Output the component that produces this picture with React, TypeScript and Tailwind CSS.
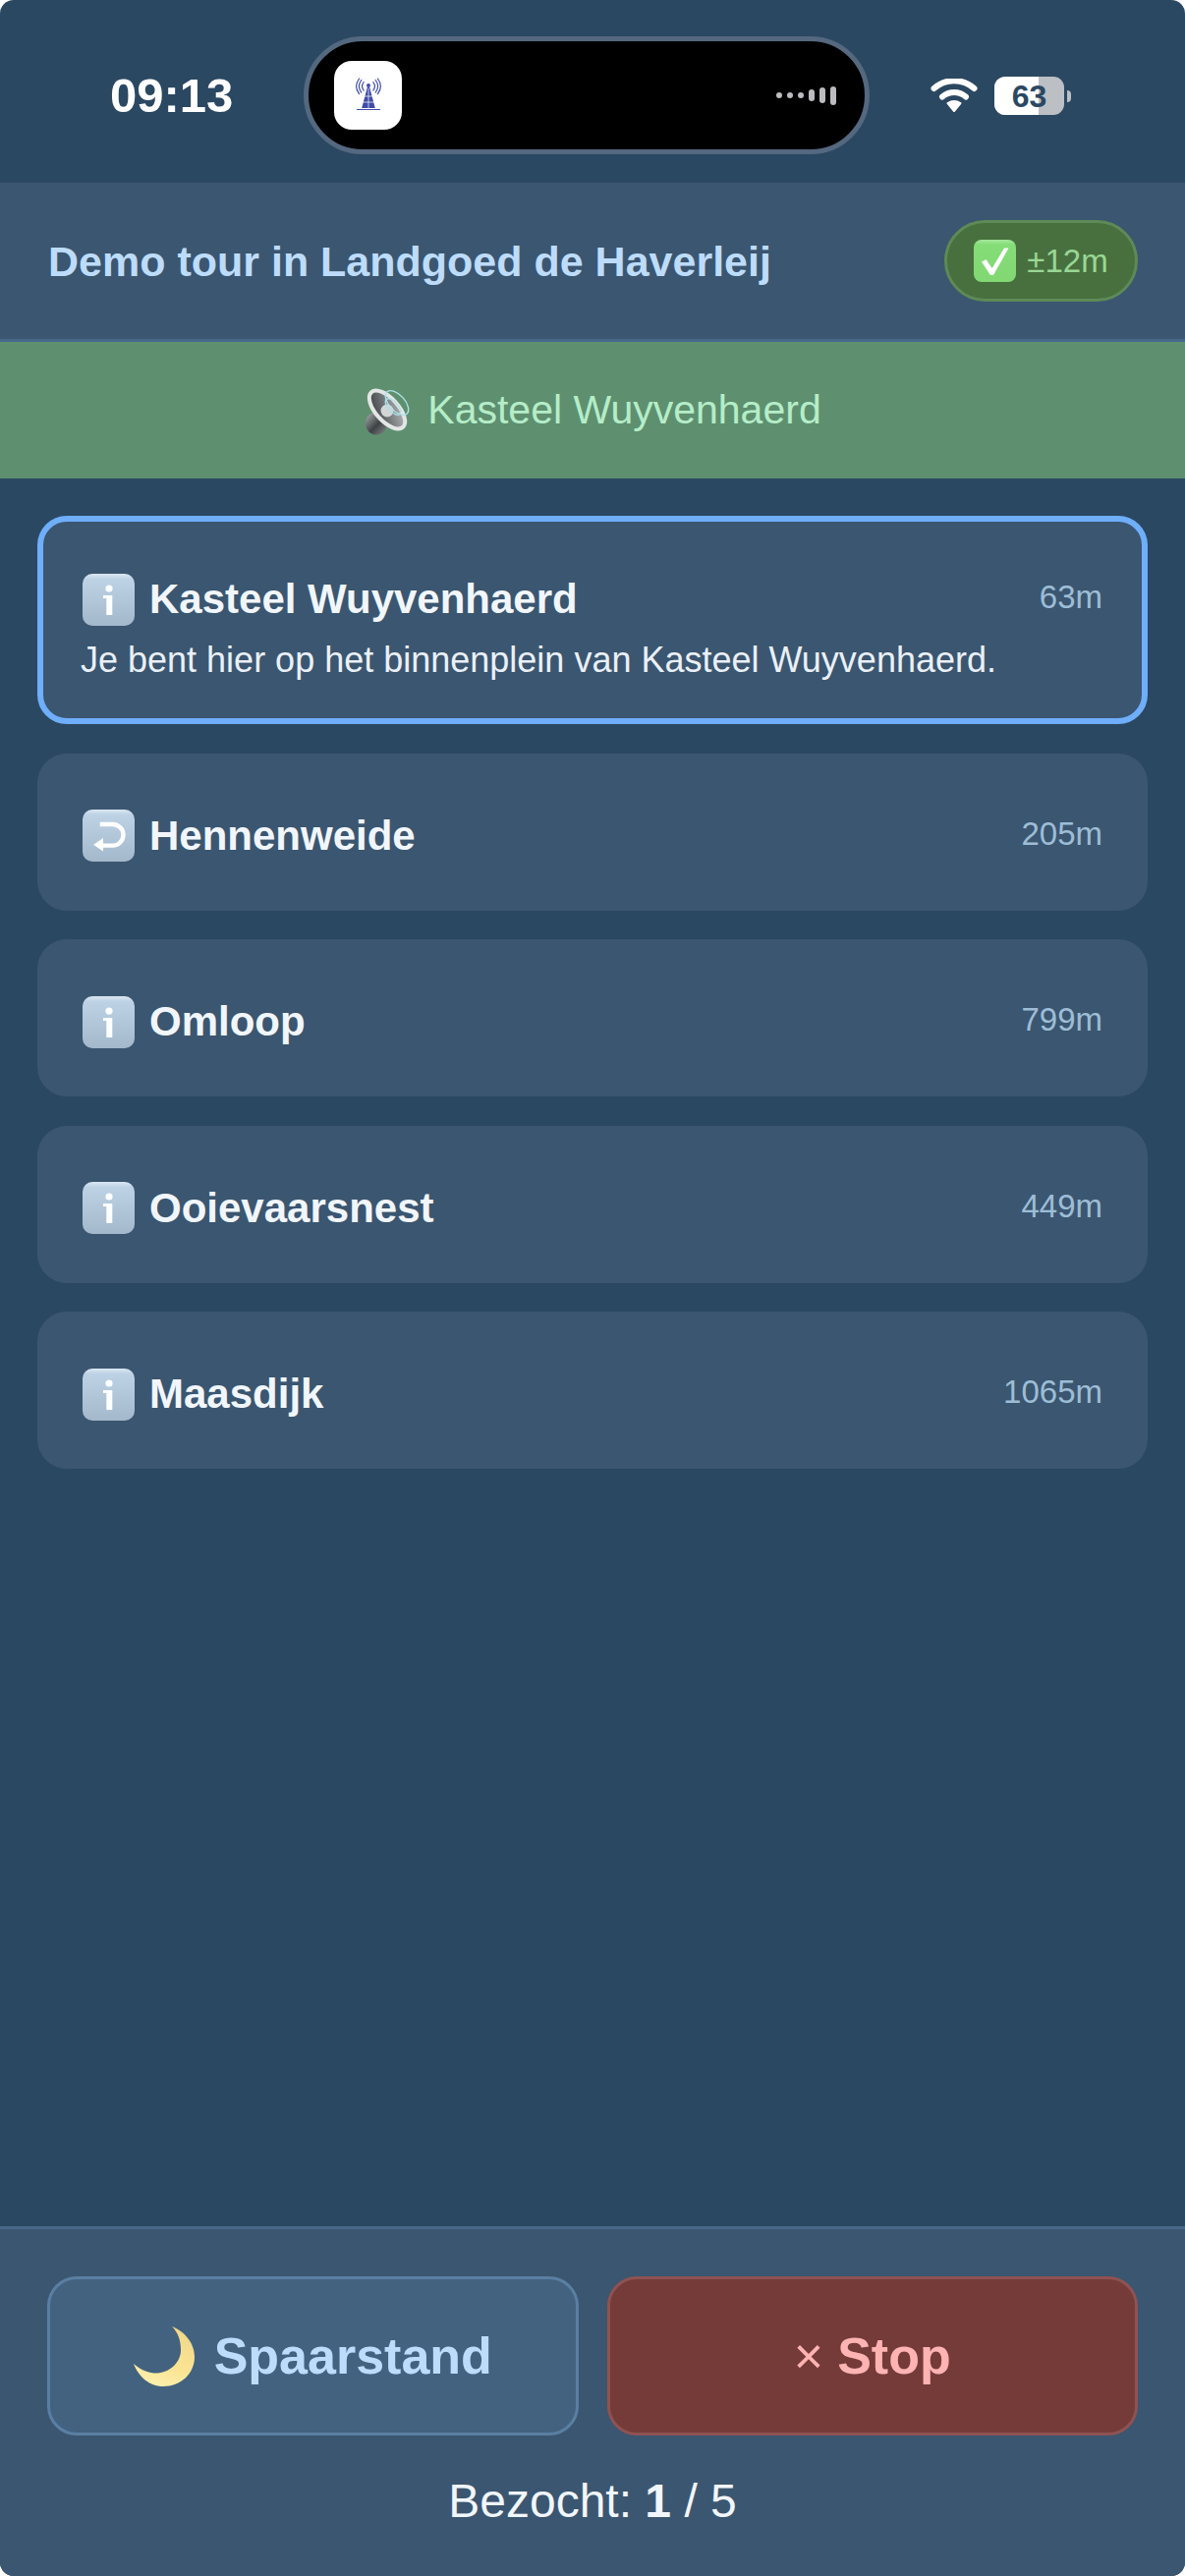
const FONT = { fontFamily: '"Liberation Sans", Arial, sans-serif' };

const TowerIcon = () => (
  <svg width="40" height="40" viewBox="0 0 40 40" fill="none">
    <g stroke="#3f4ca8" strokeWidth="1.2" strokeLinecap="round">
      <path d="M15.2 6.5c-2 2.6-2 6 0 8.6" />
      <path d="M12.8 4.5c-3 4-3 8.6 0 12.6" />
      <path d="M10.6 3c-3.8 5-3.8 10.6 0 15.6" />
      <path d="M24.8 6.5c2 2.6 2 6 0 8.6" />
      <path d="M27.2 4.5c3 4 3 8.6 0 12.6" />
      <path d="M29.4 3c3.8 5 3.8 10.6 0 15.6" />
    </g>
    <circle cx="20" cy="10" r="2" fill="#3f4ca8" />
    <path d="M18.8 12h2.4l5.6 21h-13.6z" fill="#3f4ca8" />
    <path d="M14 27h12M20 13v20M16 21h8" stroke="#fff" strokeWidth="0.7" />
    <path d="M8.5 34.5h23" stroke="#3f4ca8" strokeWidth="1.2" strokeLinecap="round" />
  </svg>
);

const WifiIcon = () => (
  <svg width="48" height="36" viewBox="0 0 48 36" fill="none" stroke="#fff" strokeLinecap="round">
    <path d="M3.5 10C15 -0.5 33 -0.5 44.5 10" strokeWidth="6" />
    <path d="M12 18.5C19 12.5 29 12.5 36 18.5" strokeWidth="6" />
    <path d="M17.5 25C21.5 22.5 26.5 22.5 30.5 25L24 33z" fill="#fff" stroke="#fff" strokeWidth="2" strokeLinejoin="round" />
  </svg>
);

const CheckEmoji = () => (
  <svg width="43" height="43" viewBox="0 0 43 43">
    <defs>
      <linearGradient id="chk" x1="0" y1="0" x2="0" y2="1">
        <stop offset="0" stopColor="#a5e89a" />
        <stop offset="0.12" stopColor="#84dd77" />
        <stop offset="1" stopColor="#82d873" />
      </linearGradient>
    </defs>
    <rect width="43" height="43" rx="8" fill="url(#chk)" />
    <path d="M8 22.5l4.5-2.5 6.2 9L31 8.5h4.5L20 36h-3z" fill="#fff" />
  </svg>
);

const EmojiTile = ({ children }: { children: React.ReactNode }) => (
  <svg width="53" height="53" viewBox="0 0 53 53" className="shrink-0">
    <defs>
      <linearGradient id="tile" x1="0" y1="0" x2="0" y2="1">
        <stop offset="0" stopColor="#dce8f2" />
        <stop offset="0.1" stopColor="#bdd2e5" />
        <stop offset="1" stopColor="#a4b8cb" />
      </linearGradient>
    </defs>
    <rect width="53" height="53" rx="10" fill="url(#tile)" />
    {children}
  </svg>
);

const InfoEmoji = () => (
  <EmojiTile>
    <circle cx="27" cy="15" r="3.6" fill="#fff" />
    <path d="M21 22h9.3v20h-6V25H21z" fill="#fff" />
  </EmojiTile>
);

const ReturnEmoji = () => (
  <EmojiTile>
    <path d="M17.7 15h13a10.8 10.8 0 0 1 0 21.6H18" fill="none" stroke="#fff" strokeWidth="4.4" />
    <path d="M21 29v13.5L11 35.7z" fill="#fff" />
  </EmojiTile>
);

const SpeakerEmoji = () => (
  <svg width="52" height="50" viewBox="0 0 52 50" className="shrink-0">
    <defs>
      <linearGradient id="cone" x1="0" y1="0" x2="1" y2="1">
        <stop offset="0" stopColor="#2f3234" />
        <stop offset="0.45" stopColor="#6f7274" />
        <stop offset="1" stopColor="#c4c7c7" />
      </linearGradient>
      <linearGradient id="magnet" x1="0" y1="0" x2="1" y2="1">
        <stop offset="0" stopColor="#b0b3b4" />
        <stop offset="0.55" stopColor="#3f4244" />
        <stop offset="1" stopColor="#8a8d8e" />
      </linearGradient>
    </defs>
    <ellipse cx="13" cy="38" rx="11" ry="11.5" fill="url(#magnet)" />
    <ellipse cx="24" cy="24" rx="11.5" ry="24" transform="rotate(-42 24 24)" fill="url(#cone)" stroke="#e4e6e6" strokeWidth="4" />
    <circle cx="24" cy="25" r="6.5" fill="#d3d6d6" />
    <g fill="none" stroke="#aee0e8" strokeWidth="1.4">
      <ellipse cx="34" cy="17" rx="8" ry="15" transform="rotate(-42 34 17)" />
      <ellipse cx="30" cy="21" rx="5" ry="10" transform="rotate(-42 30 21)" />
    </g>
  </svg>
);

const MoonEmoji = () => (
  <svg width="62" height="62" viewBox="0 0 62 62" className="shrink-0">
    <defs>
      <linearGradient id="moon" x1="0.7" y1="0" x2="0.3" y2="1">
        <stop offset="0" stopColor="#efd78a" />
        <stop offset="0.6" stopColor="#fbe594" />
        <stop offset="1" stopColor="#fdf0ad" />
      </linearGradient>
    </defs>
    <path
      d="M39 1C52 6 62 18 62 32 62 49 48 62 30 62 16 62 5 52 0 39 8 46 17 49 25 48.5 38 47 48 37 48 25 48 15 45 7 39 1z"
      fill="url(#moon)"
    />
  </svg>
);

interface StopItem {
  name: string;
  distance: string;
  icon: React.ReactNode;
  text?: string;
  active?: boolean;
}

const stops: StopItem[] = [
  {
    name: 'Kasteel Wuyvenhaerd',
    distance: '63m',
    icon: <InfoEmoji />,
    text: 'Je bent hier op het binnenplein van Kasteel Wuyvenhaerd.',
    active: true,
  },
  { name: 'Hennenweide', distance: '205m', icon: <ReturnEmoji /> },
  { name: 'Omloop', distance: '799m', icon: <InfoEmoji /> },
  { name: 'Ooievaarsnest', distance: '449m', icon: <InfoEmoji /> },
  { name: 'Maasdijk', distance: '1065m', icon: <InfoEmoji /> },
];

const StopCard = ({ stop }: { stop: StopItem }) => (
  <div
    className={`rounded-[30px] bg-[#3b5670] ${
      stop.active
        ? 'border-[6px] border-[#6eaefa] pl-[38px] pr-[40px] pt-[51px] pb-[37px]'
        : 'pl-[44px] pr-[46px] pt-[56px] pb-[48px]'
    }`}
  >
    <div className="flex items-center justify-between">
      <div className="flex items-center gap-[15px]">
        <span className="ml-[2px] flex">{stop.icon}</span>
        <span className="text-[42px] leading-[56px] font-bold text-[#f1f6fd]">{stop.name}</span>
      </div>
      <span className="-translate-y-[2px] text-[33px] leading-[40px] text-[#9dbdd6]">{stop.distance}</span>
    </div>
    {stop.text && <p className="mt-[12px] text-[36px] leading-[44px] text-[#eaf0f8]">{stop.text}</p>}
  </div>
);

const App = () => {
  return (
    <div style={FONT} className="flex h-[2622px] w-[1206px] flex-col overflow-hidden rounded-[14px] bg-[#2b4862]">
      {/* Status bar */}
      <div className="relative flex h-[186px] shrink-0 items-center">
        <span className="ml-[112px] mt-[8px] text-[49px] leading-none font-bold text-white">09:13</span>
        <div className="absolute left-[309px] top-[37px] flex h-[120px] w-[576px] items-center justify-between rounded-[60px] border-[5px] border-[#54687f] bg-black pl-[26px] pr-[29px]">
          <div className="flex h-[70px] w-[69px] items-center justify-center rounded-[18px] bg-white">
            <TowerIcon />
          </div>
          <div className="flex items-center gap-[5px]">
            <span className="h-[6px] w-[6px] rounded-full bg-[#bcbcc0]" />
            <span className="h-[6px] w-[6px] rounded-full bg-[#bcbcc0]" />
            <span className="h-[6px] w-[6px] rounded-full bg-[#bcbcc0]" />
            <span className="h-[12px] w-[6px] rounded-full bg-[#bcbcc0]" />
            <span className="h-[16px] w-[6px] rounded-full bg-[#bcbcc0]" />
            <span className="h-[19px] w-[6px] rounded-full bg-[#bcbcc0]" />
          </div>
        </div>
        <div className="absolute left-[947px] top-[80px]">
          <WifiIcon />
        </div>
        <div className="absolute left-[1012px] top-[78px] flex items-center">
          <div className="relative flex h-[39px] w-[71px] items-center justify-center overflow-hidden rounded-[11px] bg-[#bcbfc4]">
            <div className="absolute inset-y-0 left-0 w-[45px] bg-white" />
            <span className="relative text-[32px] leading-none font-bold text-[#2b4862]">63</span>
          </div>
          <div className="ml-[3px] h-[12px] w-[4px] rounded-r-full bg-[#bcbfc4]" />
        </div>
      </div>

      {/* Header */}
      <div className="flex h-[162px] shrink-0 items-center justify-between border-b-[3px] border-[#46688a] bg-[#3b5670] pl-[49px] pr-[48px]">
        <h1 className="mt-[2px] text-[43px] font-bold text-[#bddcfb]">Demo tour in Landgoed de Haverleij</h1>
        <div className="flex h-[83px] w-[197px] items-center justify-center gap-[11px] rounded-full border-[3px] border-[#5d8a56] bg-[#48703f]">
          <CheckEmoji />
          <span className="text-[33px] text-[#99d794]">±12m</span>
        </div>
      </div>

      {/* Now playing */}
      <div className="flex h-[139px] shrink-0 items-center justify-center gap-[13px] bg-[#5e9070]">
        <SpeakerEmoji />
        <span className="text-[41px] text-[#b5edc8]">Kasteel Wuyvenhaerd</span>
      </div>

      {/* Stops */}
      <div className="flex flex-1 flex-col gap-[29.5px] px-[38px] pt-[38px]">
        {stops.map((stop) => (
          <StopCard key={stop.name} stop={stop} />
        ))}
      </div>

      {/* Footer */}
      <div className="flex h-[356px] shrink-0 flex-col border-t-[3px] border-[#46688a] bg-[#3b5670] px-[48px] pt-[48px]">
        <div className="flex gap-[29px]">
          <button className="flex h-[162px] flex-1 items-center justify-center gap-[20px] rounded-[30px] border-[3px] border-[#5a7fa3] bg-[#436280] text-[52px] font-bold text-[#bddcfb]">
            <MoonEmoji />
            Spaarstand
          </button>
          <button className="flex h-[162px] flex-1 items-center justify-center gap-[14px] rounded-[30px] border-[3px] border-[#8f5252] bg-[#743b38] text-[52px] font-bold text-[#ffb3b3]">
            <span className="font-normal">×</span>
            Stop
          </button>
        </div>
        <p className="mt-[39px] text-center text-[48px] leading-[56px] text-[#f1f6fd]">
          Bezocht: <b>1</b> / 5
        </p>
      </div>
    </div>
  );
};

export default App;
